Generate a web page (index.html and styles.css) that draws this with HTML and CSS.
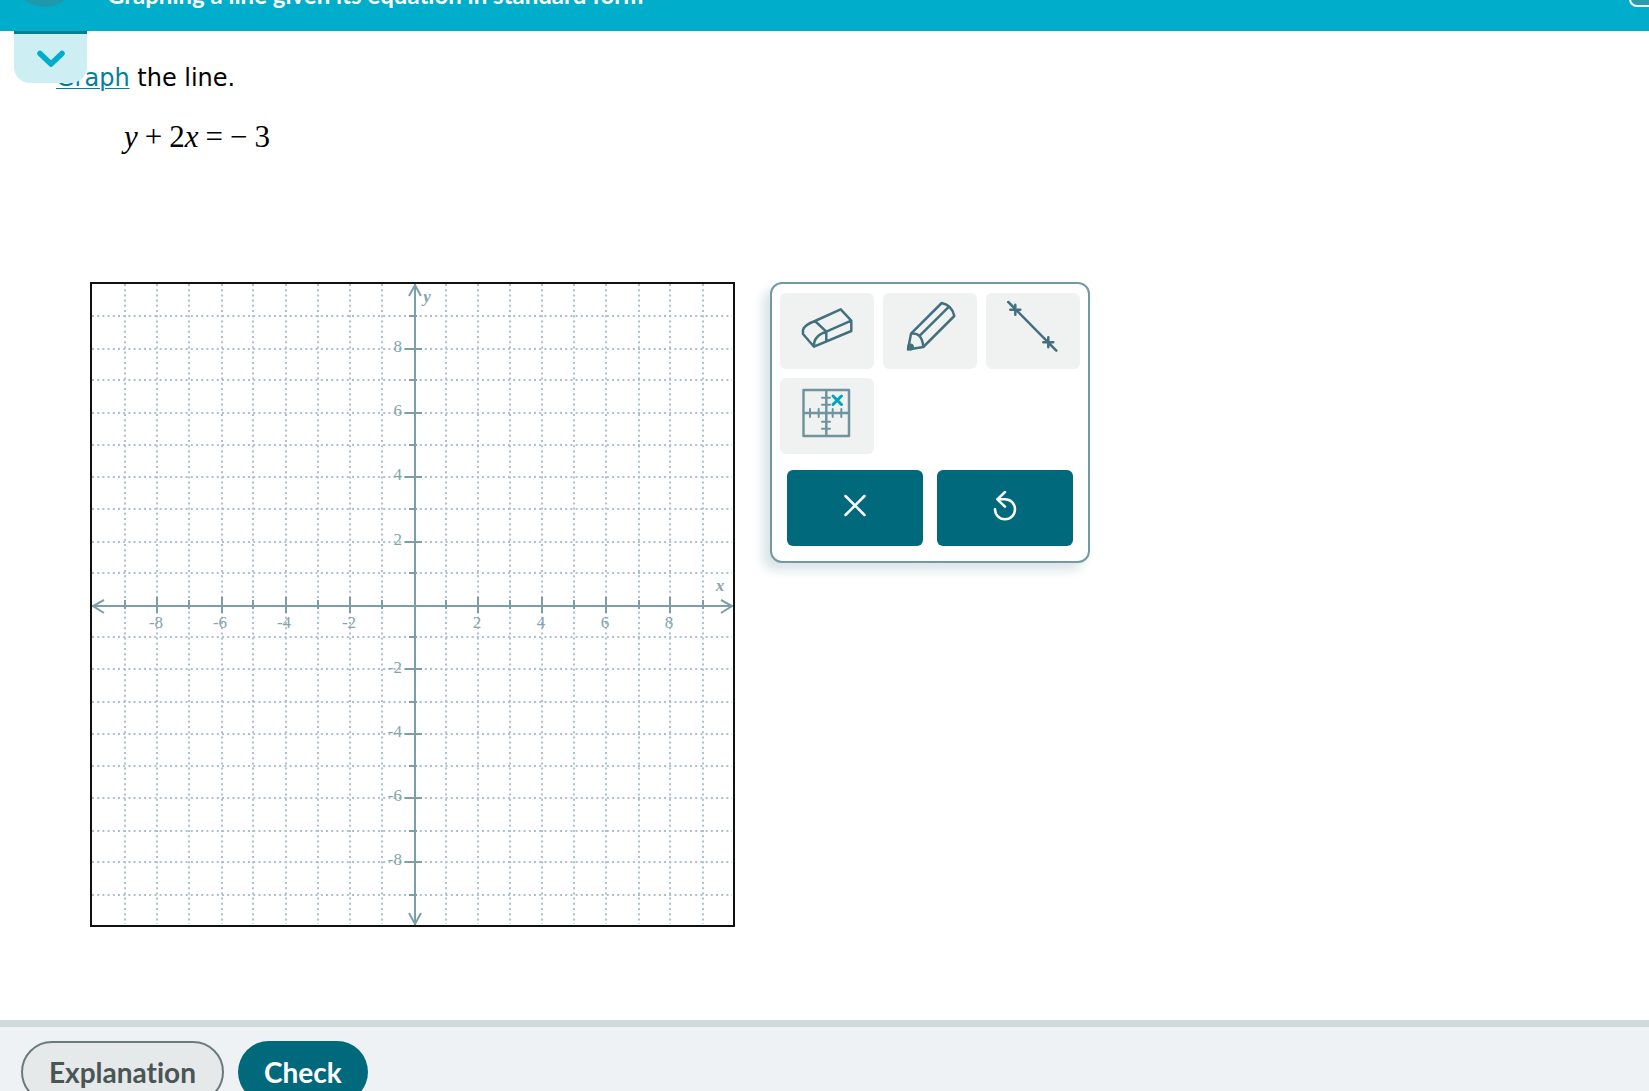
FILE: index.html
```html
<!DOCTYPE html>
<html lang="en">
<head>
<meta charset="utf-8">
<title>Graphing a line given its equation in standard form</title>
<link rel="stylesheet" href="styles.css">
</head>
<body>
<header class="topbar">
  <button class="menu-button" aria-label="Menu"></button>
  <h1 class="topic">Graphing a line given its equation in standard form</h1>
  <button class="corner-button" aria-label="Options"></button>
</header>

<main class="problem">
  <button class="drawer-tab" aria-label="Show details">
    <svg width="30" height="20" viewBox="0 0 30 20"><path d="M4 4.5L15 15L26 4.5" fill="none" stroke="#00adca" stroke-width="5.5" stroke-linecap="round" stroke-linejoin="round"/></svg>
  </button>
  <p class="prompt"><a href="#">Graph</a> the line.</p>
  <p class="equation"><i>y</i><span>+</span><span>2<i>x</i></span><span>=</span><span>−</span><span>3</span></p>

  <div class="workspace">
    <svg class="graph" width="645" height="645" viewBox="0 0 645 645" role="img" aria-label="Coordinate plane">
      <g class="dots">
        <path d="M35 2V642M67 2V642M99 2V642M132 2V642M163 2V642M196 2V642M228 2V642M260 2V642M292 2V642M356 2V642M388 2V642M420 2V642M452 2V642M484 2V642M516 2V642M549 2V642M580 2V642M613 2V642"/>
        <path d="M2 34H642M2 67H642M2 98H642M2 131H642M2 163H642M2 195H642M2 227H642M2 260H642M2 291H642M2 355H642M2 387H642M2 420H642M2 452H642M2 484H642M2 516H642M2 549H642M2 580H642M2 613H642"/>
      </g>
      <g class="axes">
        <path d="M2 324H643M325 2V643"/>
        <path d="M14 318L3 324L14 331M631 318L642 324L631 331M319 14L325 3L331 14M319 631L325 642L331 631"/>
        <path d="M35 318V327M99 318V327M163 318V327M228 318V327M292 318V327M356 318V327M420 318V327M484 318V327M549 318V327M613 318V327"/>
        <path d="M67 315V331M132 315V331M196 315V331M260 315V331M388 315V331M452 315V331M516 315V331M580 315V331"/>
        <path d="M319 34H327M319 98H327M319 163H327M319 227H327M319 291H327M319 355H327M319 420H327M319 484H327M319 549H327M319 613H327"/>
        <path d="M315 67H332M315 131H332M315 195H332M315 260H332M315 387H332M315 452H332M315 516H332M315 580H332"/>
      </g>
      <g class="labels" text-anchor="middle">
        <text x="66" y="346">-8</text><text x="130" y="346">-6</text><text x="194" y="346">-4</text><text x="259" y="346">-2</text>
        <text x="387" y="346">2</text><text x="451" y="346">4</text><text x="515" y="346">6</text><text x="579" y="346">8</text>
      </g>
      <g class="labels" text-anchor="end">
        <text x="312" y="70">8</text><text x="312" y="134">6</text><text x="312" y="198">4</text><text x="312" y="263">2</text>
        <text x="312" y="391">-2</text><text x="312" y="455">-4</text><text x="312" y="519">-6</text><text x="312" y="583">-8</text>
      </g>
      <g class="labels names" text-anchor="middle"><text x="337" y="20">y</text><text x="630" y="309">x</text></g>
      <rect x="1" y="1" width="643" height="643" fill="none" stroke="#111" stroke-width="2"/>
    </svg>

    <section class="toolbox" aria-label="Drawing tools">
      <div class="tools">
        <button class="tool" aria-label="Eraser">
          <svg width="56" height="56" viewBox="0 0 56 56"><path d="M16 21L41.7 9.3L52.3 20.7V31L15 46.7L4 34V30Q5 25 16 21L27.3 31.7V40.7M27.3 31.7L52.3 20.7M15 46.7Q14 36 27.3 31.7"/></svg>
        </button>
        <button class="tool" aria-label="Pencil">
          <svg width="56" height="56" viewBox="0 0 56 56"><path d="M9 33.7L39.7 3Q50 5 52.3 16L21.3 47L6 49.5ZQ20 32 21.3 47M18 35.3L47 6.7"/><circle cx="8.5" cy="47" r="3.5" class="solid"/></svg>
        </button>
        <button class="tool" aria-label="Line">
          <svg width="56" height="56" viewBox="0 0 56 56"><path d="M3.3 2L51.3 50.7M5.3 9.7H15.3M10.3 4.7V14.7M38.3 42.3H48.3M43.3 37.3V47.3"/></svg>
        </button>
        <button class="tool" aria-label="Plot a point">
          <svg width="56" height="56" viewBox="0 0 56 56" class="plot"><path d="M4.5 5H50V51H4.5ZM27.3 5V51M4.5 28H50"/><path class="thin" d="M11 24V32M19.7 24V32M33.7 24V32M42.3 24V32M23 12.7H31M23 19.7H31M23 36.7H31M23 43.7H31"/><path class="mark" d="M34 11L42.5 19.5M42.5 11L34 19.5"/></svg>
        </button>
      </div>
      <div class="actions">
        <button class="action" aria-label="Clear"><svg width="32" height="32" viewBox="0 0 32 32"><path d="M6.5 7L25.5 26M25.5 7L6.5 26"/></svg></button>
        <button class="action" aria-label="Undo"><svg width="32" height="32" viewBox="0 0 32 32"><path d="M16 3L8.3 10.3L16 17.7M8.3 10.3H16A10 10 0 1 1 6 20.3"/></svg></button>
      </div>
    </section>
  </div>
</main>

<footer class="bottombar">
  <button class="pill secondary">Explanation</button>
  <button class="pill primary">Check</button>
</footer>
</body>
</html>
```
FILE: styles.css
```css
* { box-sizing: border-box; }
html, body { height: 100%; }
body {
  margin: 0;
  display: flex;
  flex-direction: column;
  overflow: hidden;
  background: #fff;
  color: #000;
  font-family: "DejaVu Sans", sans-serif;
}
button {
  margin: 0;
  padding: 0;
  border: 0;
  cursor: pointer;
}
svg { display: block; }

.topbar {
  flex: none;
  height: 31px;
  display: flex;
  align-items: flex-end;
  overflow: hidden;
  background: #00adca;
  padding-left: 13px;
}
.menu-button {
  flex: none;
  width: 64px;
  height: 64px;
  margin-bottom: 24px;
  border-radius: 50%;
  background: #1e98ab;
}
.topic {
  flex: 1;
  margin: 0 0 22px 30px;
  color: #fff;
  font: 700 24px/28px Lato, sans-serif;
  font-variant-ligatures: none;
  white-space: nowrap;
}
.corner-button {
  flex: none;
  width: 40px;
  height: 40px;
  margin: 0 -20px 24px 0;
  border: 2px solid #fff;
  border-radius: 8px;
  background: #2a9bae;
}

.problem {
  flex: 1;
  min-height: 0;
  position: relative;
  padding: 31px 56px 0;
}
.drawer-tab {
  position: absolute;
  top: 0;
  left: 14px;
  width: 73px;
  height: 52px;
  display: flex;
  align-items: center;
  justify-content: center;
  border-top: 3px solid #007f91;
  border-radius: 0 0 16px 16px;
  background: #cdeef3;
}
.prompt {
  margin: 0;
  font-size: 24px;
  line-height: 32px;
}
.prompt a {
  color: #00809a;
  text-decoration-thickness: 1px;
  text-underline-offset: 2px;
}
.equation {
  display: flex;
  gap: 7px;
  margin: 23px 0 0 68px;
  font: 31px/40px "Liberation Serif", serif;
}
.workspace {
  display: flex;
  align-items: flex-start;
  gap: 35px;
  margin: 125px 0 0 34px;
}
.graph { flex: none; }
.dots path {
  fill: none;
  stroke: #acc2c8;
  stroke-width: 2;
  stroke-dasharray: 2 3.2;
}
.axes path {
  fill: none;
  stroke: #7a9fa9;
  stroke-width: 2;
}
.labels {
  fill: #83a5ae;
  font: 17px "Liberation Serif", serif;
}
.names { font-style: italic; font-weight: 700; }

.toolbox {
  flex: none;
  width: 320px;
  padding: 9px 8px 15px;
  border: 2px solid #7399a3;
  border-radius: 12px;
  background: #fff;
  box-shadow: -7px 7px 12px #d9e3e6;
}
.tools {
  display: grid;
  grid-template-columns: repeat(3, 1fr);
  gap: 9px;
}
.tool, .action {
  height: 76px;
  display: flex;
  align-items: center;
  justify-content: center;
  padding-bottom: 6px;
  border-radius: 6px;
}
.tool { background: #f0f2f2; }
.tool path {
  fill: none;
  stroke: #42707e;
  stroke-width: 2.5;
  stroke-linecap: round;
  stroke-linejoin: round;
}
.solid { fill: #42707e; }
.tool .plot path { stroke: #6f949e; }
.tool .plot .thin { stroke-width: 2; }
.tool .plot .mark { stroke: #00a5bb; stroke-width: 3; }
.actions {
  display: grid;
  grid-template-columns: 1fr 1fr;
  gap: 14px;
  margin: 16px 7px 0;
}
.action { background: #00697c; }
.action path {
  fill: none;
  stroke: #fff;
  stroke-width: 2.5;
  stroke-linecap: round;
  stroke-linejoin: round;
}

.bottombar {
  flex: none;
  height: 71px;
  display: flex;
  align-items: flex-start;
  gap: 14px;
  padding: 14px 21px 0;
  border-top: 7px solid #cfdadc;
  background: #eef2f4;
}
.pill {
  flex: none;
  height: 62px;
  padding: 0 26px;
  border-radius: 31px;
  font: 700 28px/32px Lato, sans-serif;
  font-variant-ligatures: none;
}
.secondary {
  border: 2px solid #6b7b7b;
  background: #e6e9ea;
  color: #4a5555;
}
.primary {
  background: #00697c;
  color: #fff;
}
```
